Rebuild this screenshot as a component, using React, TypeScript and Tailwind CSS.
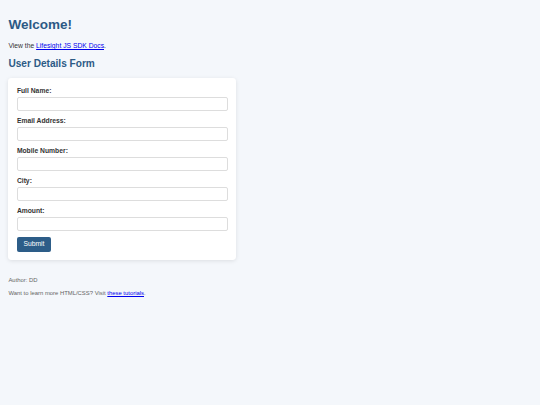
const fields = ["Full Name:", "Email Address:", "Mobile Number:", "City:", "Amount:"];

export default function App() {
  return (
    <div className="min-h-screen bg-[#f4f7fb] p-[8.44px] font-['Liberation_Sans',Arial,sans-serif] text-[#333]">
      <h1 className="mt-[9px] mb-[9px] text-[13.5px] font-bold leading-[15.5px] text-[#2c5a85]">Welcome!</h1>
      <p className="text-[6.75px] leading-[7.76px]">
        View the{" "}
        <a href="#" className="text-[#0000ee] underline">
          Lifesight JS SDK Docs
        </a>
        .
      </p>
      <h2 className="mt-[8.4px] mb-[8.4px] text-[10.1px] font-bold leading-[11.6px] text-[#2c5a85]">
        User Details Form
      </h2>
      <form className="w-[227.8px] rounded-[3.4px] bg-white p-[8.44px] shadow-[0_1px_4px_rgba(0,0,0,0.1)]">
        {fields.map((f) => (
          <div key={f}>
            <label className="mb-[2.5px] block text-[6.75px] font-bold leading-[8px] text-[#333]">{f}</label>
            <input
              type="text"
              className="mb-[6px] block h-[13.5px] w-full rounded-[2px] border border-[#ddd] bg-white"
            />
          </div>
        ))}
        <button
          type="button"
          className="flex h-[15.5px] items-center rounded-[2px] bg-[#2d5d88] px-[6.5px] text-[6.75px] leading-[7.76px] text-white"
        >
          Submit
        </button>
      </form>
      <footer className="mt-[17px] flex flex-col gap-[5.9px] text-[5.9px] leading-[6.8px] text-[#666]">
        <p>Author: DD</p>
        <p>
          Want to learn more HTML/CSS? Visit{" "}
          <a href="#" className="text-[#0000ee] underline">
            these tutorials
          </a>
          .
        </p>
      </footer>
    </div>
  );
}
